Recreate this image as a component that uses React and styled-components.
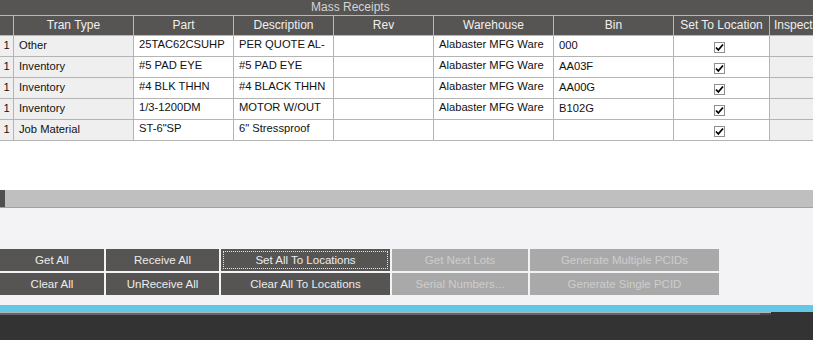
import React from "react"
import styled, { createGlobalStyle } from "styled-components"

const GlobalStyle = createGlobalStyle`
  html, body {
    margin: 0;
    padding: 0;
    background: #ffffff;
    overflow: hidden;
  }
  * {
    box-sizing: border-box;
  }
`

const columns = [
  { key: "num", title: "", width: 14 },
  { key: "type", title: "Tran Type", width: 120 },
  { key: "part", title: "Part", width: 100 },
  { key: "desc", title: "Description", width: 100 },
  { key: "rev", title: "Rev", width: 100 },
  { key: "wh", title: "Warehouse", width: 120 },
  { key: "bin", title: "Bin", width: 120 },
  { key: "set", title: "Set To Location", width: 96 },
  { key: "insp", title: "Inspect", width: 100 },
]

const rows = [
  { type: "Other", part: "25TAC62CSUHP", desc: "PER QUOTE AL-", wh: "Alabaster MFG Ware", bin: "000" },
  { type: "Inventory", part: "#5 PAD EYE", desc: "#5 PAD EYE", wh: "Alabaster MFG Ware", bin: "AA03F" },
  { type: "Inventory", part: "#4 BLK THHN", desc: "#4 BLACK THHN", wh: "Alabaster MFG Ware", bin: "AA00G" },
  { type: "Inventory", part: "1/3-1200DM", desc: "MOTOR W/OUT", wh: "Alabaster MFG Ware", bin: "B102G" },
  { type: "Job Material", part: "ST-6\"SP", desc: "6\" Stressproof", wh: "", bin: "" },
]

const buttonRows = [
  [
    { label: "Get All" },
    { label: "Receive All" },
    { label: "Set All To Locations", focused: true },
    { label: "Get Next Lots", disabled: true },
    { label: "Generate Multiple PCIDs", disabled: true },
  ],
  [
    { label: "Clear All" },
    { label: "UnReceive All" },
    { label: "Clear All To Locations" },
    { label: "Serial Numbers...", disabled: true },
    { label: "Generate Single PCID", disabled: true },
  ],
]

const gridTemplate = columns.map((c) => `${c.width}px`).join(" ")

const Window = styled.div`
  width: 813px;
  height: 340px;
  display: flex;
  flex-direction: column;
  font-family: "Liberation Sans", Arial, sans-serif;
  font-size: 11px;
  overflow: hidden;
`

const TitleBar = styled.div`
  height: 15px;
  flex: none;
  background: #575553;
  color: #d4d4d4;
  font-size: 12px;
  line-height: 15px;
  padding-left: 311px;
  white-space: nowrap;
`

const GridArea = styled.div`
  height: 175px;
  flex: none;
  background: #ffffff;
  overflow: hidden;
`

const Row = styled.div`
  display: grid;
  grid-template-columns: ${gridTemplate};
  width: max-content;
`

const HeaderRow = styled(Row)`
  height: 21px;
  background: #575553;
  border-top: 1px solid #b8b8b8;
  border-bottom: 1px solid #b8b8b8;
`

const HeaderCell = styled.div`
  color: #f0f0f0;
  font-size: 12px;
  line-height: 18px;
  border-right: 1px solid #b8b8b8;
  white-space: nowrap;
  overflow: hidden;
  padding-left: ${(p) => (p.$left ? "4px" : "0")};
  text-align: ${(p) => (p.$left ? "left" : "center")};
`

const BodyRow = styled(Row)`
  height: 21px;
  border-bottom: 1px solid #b4b4b4;
`

const Cell = styled.div`
  background: ${(p) => (p.$readOnly ? "#efefef" : "#ffffff")};
  border-right: 1px solid #b4b4b4;
  color: #111111;
  font-size: 11.2px;
  padding: ${(p) => (p.$top ? "1px 5px 0" : "0 5px")};
  line-height: ${(p) => (p.$top ? "15px" : "19px")};
  white-space: nowrap;
  overflow: hidden;
`

const NumCell = styled(Cell)`
  padding: 0;
  text-align: center;
`

const CheckCell = styled(Cell)`
  display: flex;
  justify-content: center;
  align-items: flex-start;
  padding-top: 6px;
  padding-left: 1px;
`

const CheckBox = styled.span`
  width: 11px;
  height: 11px;
  border: 1px solid #8e8e8e;
  background: #ffffff;
  display: flex;
  align-items: center;
  justify-content: center;
`

const ScrollBar = styled.div`
  height: 18px;
  flex: none;
  display: flex;
  background: #bfbfbf;
  border-bottom: 1px solid #a2a2a2;
`

const ScrollStub = styled.div`
  width: 5px;
  background: #4f4f4f;
`

const ButtonPanel = styled.div`
  height: 97px;
  flex: none;
  background: #f3f3f5;
  padding-top: 41px;
  display: flex;
  flex-direction: column;
  gap: 2px;
`

const ButtonRow = styled.div`
  display: grid;
  grid-template-columns: 104px 113px 169px 136px 189px;
  gap: 2px;
`

const ActionButton = styled.button`
  height: 22px;
  margin: 0;
  border: none;
  padding: 0;
  font-family: "Liberation Sans", Arial, sans-serif;
  font-size: 11.5px;
  background: ${(p) => (p.$disabled ? "#a9a9a9" : "#575553")};
  color: ${(p) => (p.$disabled ? "#cdcdcd" : "#ececec")};
  outline: ${(p) => (p.$focused ? "1px dotted #e4e4e4" : "none")};
  outline-offset: -3px;
  cursor: default;
`

const BlueStrip = styled.div`
  height: 7px;
  flex: none;
  background: #63c7e7;
`

const StatusArea = styled.div`
  flex: 1;
  background: #333333;
`

const ProgressTrack = styled.div`
  width: 771px;
  height: 3px;
  border-top: 1px solid #aeb4ba;
  background: linear-gradient(to right, #62656a 0, #62656a 760px, #48494b 760px);
`

const Check = () => (
  <svg width="9" height="9" viewBox="0 0 9 9">
    <path d="M1 4.5 L3.3 7 L8 1.5" fill="none" stroke="#000" strokeWidth="1.8" />
  </svg>
)

const renderCell = (row, col) => {
  switch (col.key) {
    case "num":
      return (
        <NumCell key={col.key} $readOnly>
          1
        </NumCell>
      )
    case "type":
      return (
        <Cell key={col.key} $readOnly>
          {row.type}
        </Cell>
      )
    case "part":
    case "desc":
    case "wh":
      return (
        <Cell key={col.key} $top>
          {row[col.key]}
        </Cell>
      )
    case "bin":
      return <Cell key={col.key}>{row.bin}</Cell>
    case "set":
      return (
        <CheckCell key={col.key}>
          <CheckBox>
            <Check />
          </CheckBox>
        </CheckCell>
      )
    case "insp":
      return <Cell key={col.key} $readOnly />
    default:
      return <Cell key={col.key} />
  }
}

const App = () => {
  return (
    <Window>
      <GlobalStyle />
      <TitleBar>Mass Receipts</TitleBar>
      <GridArea>
        <HeaderRow>
          {columns.map((c) => (
            <HeaderCell key={c.key} $left={c.key === "insp"}>
              {c.title}
            </HeaderCell>
          ))}
        </HeaderRow>
        {rows.map((r, i) => (
          <BodyRow key={i}>{columns.map((c) => renderCell(r, c))}</BodyRow>
        ))}
      </GridArea>
      <ScrollBar>
        <ScrollStub />
      </ScrollBar>
      <ButtonPanel>
        {buttonRows.map((br, i) => (
          <ButtonRow key={i}>
            {br.map((b) => (
              <ActionButton key={b.label} $disabled={b.disabled} $focused={b.focused}>
                {b.label}
              </ActionButton>
            ))}
          </ButtonRow>
        ))}
      </ButtonPanel>
      <BlueStrip />
      <StatusArea>
        <ProgressTrack />
      </StatusArea>
    </Window>
  )
}

export default App
